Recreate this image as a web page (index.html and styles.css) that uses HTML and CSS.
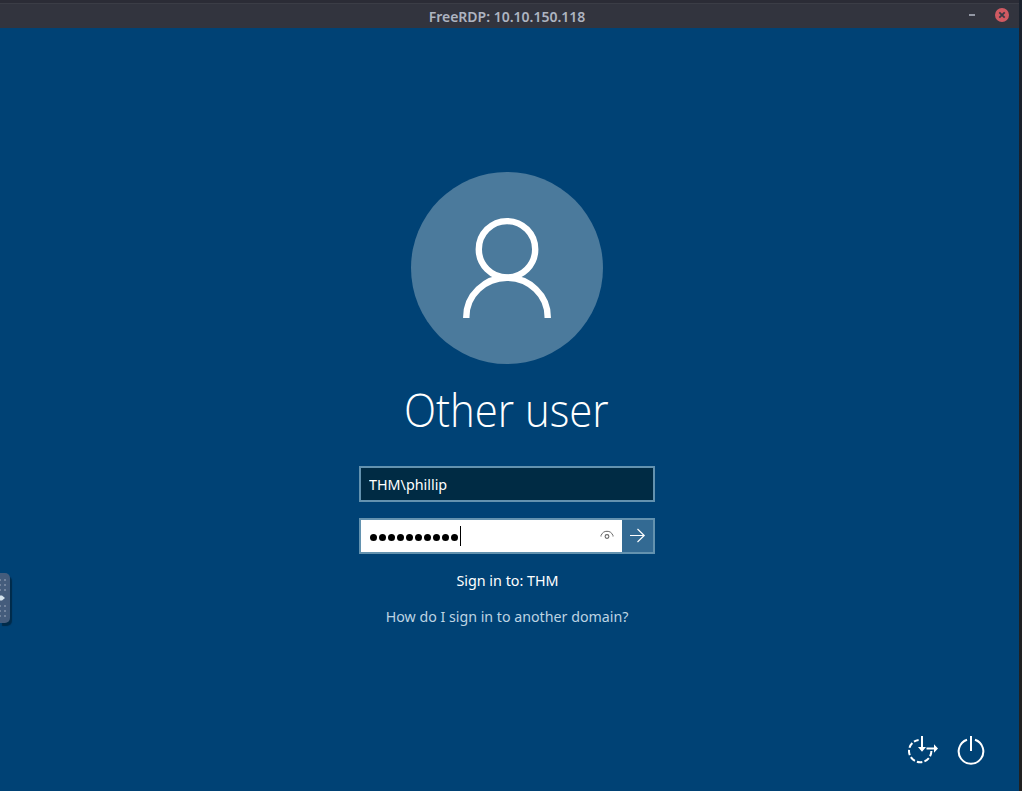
FILE: index.html
```html
<!DOCTYPE html>
<html lang="en">
<head>
<meta charset="utf-8">
<title>FreeRDP: 10.10.150.118</title>
<link rel="stylesheet" href="styles.css">
</head>
<body>
<div class="window">
  <header class="titlebar">
    <h1 class="title"><span class="fit title-text">FreeRDP: 10.10.150.118</span></h1>
    <div class="controls">
      <span class="minimize"></span>
      <svg class="close" width="14" height="14" viewBox="0 0 14 14"><circle cx="7" cy="7" r="7" fill="#d05a62"/><path d="M4.300 4.300l5.400 5.400M9.700 4.300l-5.400 5.400" stroke="#383a45" stroke-width="1.800"/></svg>
    </div>
  </header>
  <main class="screen">
    <svg class="avatar" width="192" height="192" viewBox="0 0 192 192">
      <circle cx="96" cy="96" r="96" fill="#4b7a9c"/>
      <g fill="none" stroke="#fff" stroke-width="6.4"><circle cx="96" cy="77.3" r="28.2"/><path d="M55.3 146v-1a40.7 39.2 0 0 1 81.4 0v1"/></g>
    </svg>
    <h2 class="name"><span class="fit name-text">Other user</span></h2>
    <div class="field username"><span class="fit username-text">THM\phillip</span></div>
    <div class="field password">
      <div class="dots"><i></i><i></i><i></i><i></i><i></i><i></i><i></i><i></i><i></i><i></i></div>
      <span class="caret"></span>
      <svg class="eye" width="14" height="12" viewBox="0 0 14 12" fill="none" stroke="#666"><path d="M1 6.500v-1C2.500 2.200 4.500 1.300 7 1.300s4.500.9 6 4.200v1" stroke-width="1"/><circle cx="7" cy="6.500" r="1.900" stroke-width="1.100"/></svg>
      <div class="submit"><svg width="18" height="18" viewBox="0 0 18 18" fill="none" stroke="#fff" stroke-width="1.200"><path d="M2 8.500h14.500M9.500 2l6.700 6.500-6.700 6.500"/></svg></div>
    </div>
    <p class="domain"><span class="fit domain-text">Sign in to: THM</span></p>
    <p class="help"><span class="fit help-text">How do I sign in to another domain?</span></p>
    <div class="tools">
      <svg width="32" height="32" viewBox="0 0 32 32" fill="none" stroke="#fff" stroke-width="2">
        <path d="M25.400 16A11.200 11.200 0 1 1 12.600 4.900" stroke-dasharray="5.500 2.150"/>
        <path d="M16 1v12M20.500 13.500h8"/><path d="M12 12h8L16 16.800zM28 9.300v8.400l4-4.200z" fill="#fff" stroke="none"/>
      </svg>
      <svg width="28" height="32" viewBox="0 0 28 32" fill="none" stroke="#fff" stroke-width="2"><path d="M10 4.800A12.300 12.300 0 1 0 18 4.800M14 1v15"/></svg>
    </div>
  </main>
  <div class="handle"><svg width="10" height="50" viewBox="0 0 10 50"><g stroke="#71839d" stroke-width="2" stroke-dasharray="2 3"><path d="M-1 7h7M-1 12h7M-1 17h7M-1 33h7M-1 38h7M-1 43h7"/></g><path d="M0 22.500h2l3 2.500-3 2.500H0z" fill="#d4e2ec"/></svg></div>
</div>
</body>
</html>
```
FILE: styles.css
```css
* { box-sizing: border-box; }
body { margin: 0; background: #1c1f24; font-family: "Noto Sans", "Open Sans", sans-serif; color: #fff; }
h1, h2, p { margin: 0; font-weight: 400; }
svg { display: block; }
.window { position: relative; width: 1022px; height: 791px; overflow: hidden; background: linear-gradient(#1b222e, #171c24 45%, #202020 90%); }
.titlebar { height: 28px; display: grid; grid-template-columns: 1fr auto; align-items: center; border-top: 3px solid #2b2c36; margin-right: 3px; background: #32343e; box-shadow: inset 0 1px #3b3d46; padding-right: 10px; }
.title { grid-column: 1 / 3; grid-row: 1; padding: 2px 0 0 5px; text-align: center; font-size: 14px; line-height: 23px; font-weight: 600; color: #aeb4c1; }
.controls { grid-column: 2; grid-row: 1; display: flex; align-items: center; gap: 20px; margin-top: -1px; }
.minimize { width: 6px; height: 2px; background: #9297a3; }
.screen { position: relative; width: 1019px; height: 763px; padding: 144px 5px 0 0; background: #004275; display: flex; flex-direction: column; align-items: center; }
.fit { display: inline-block; white-space: nowrap; }
.name { margin-top: 13px; height: 64px; line-height: 64px; padding-right: 2px; font-family: "Open Sans", "Noto Sans", sans-serif; font-size: 46px; font-weight: 300; }
.name-text { transform: scaleX(.912); }
.field { width: 296px; height: 36px; border: 2px solid #6392af; display: flex; align-items: center; }
.username { margin-top: 25px; padding-left: 8px; background: #002b44; font-size: 15px; }
.username-text { transform: scaleX(.955); transform-origin: left; }
.password { margin-top: 16px; background: #fff; }
.dots { display: flex; gap: 2px; padding: 3px 0 0 9px; }
.dots i { width: 7px; height: 7px; border-radius: 50%; background: #000; }
.caret { width: 1px; height: 20px; margin-left: 2px; background: #000; }
.eye { margin-left: auto; margin-right: 8px; }
.submit { width: 31px; height: 32px; padding: 7px 0 0 6px; background: #336a93; }
.domain { margin-top: 16px; font-size: 15px; line-height: 20px; padding-left: 1px; }
.domain-text { transform: scaleX(.955); }
.help { margin-top: 16px; font-size: 15px; line-height: 20px; color: #bdd4e3; padding-left: 1px; }
.help-text { transform: scaleX(.948); }
.tools { position: absolute; right: 34px; bottom: 24px; display: flex; gap: 19px; }
.handle { position: absolute; left: 0; top: 573px; width: 10px; height: 50px; background: #445c7c; border-radius: 0 5px 5px 0; box-shadow: 2px 3px 1px #002b4a; overflow: hidden; }
```
